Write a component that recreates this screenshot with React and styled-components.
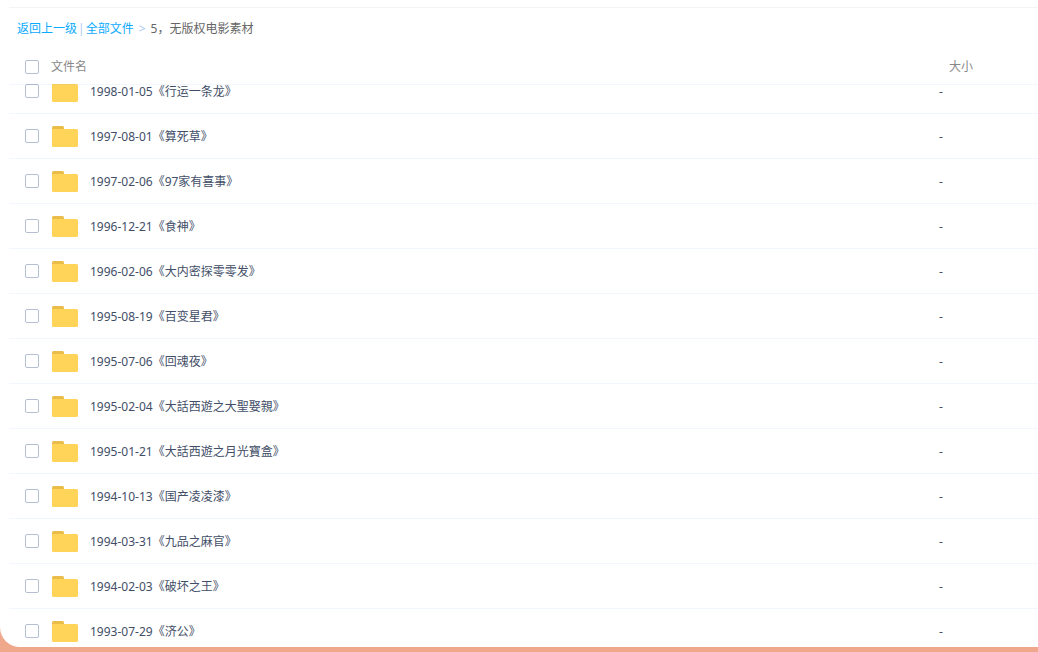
import React, { useLayoutEffect, useRef, useState } from 'react'
import styled, { createGlobalStyle } from 'styled-components';

const folders = [
  '1998-01-05《行运一条龙》',
  '1997-08-01《算死草》',
  '1997-02-06《97家有喜事》',
  '1996-12-21《食神》',
  '1996-02-06《大内密探零零发》',
  '1995-08-19《百变星君》',
  '1995-07-06《回魂夜》',
  '1995-02-04《大話西遊之大聖娶親》',
  '1995-01-21《大話西遊之月光寶盒》',
  '1994-10-13《国产凌凌漆》',
  '1994-03-31《九品之麻官》',
  '1994-02-03《破坏之王》',
  '1993-07-29《济公》',
];

const FolderIcon = () => (
  <Folder viewBox="0 0 26 21" aria-hidden="true">
    <path d="M0 6V1.5Q0 0 1.5 0H10.5Q12 0 12 1.5V6Z" fill="#eabd4a" />
    <path d="M0 3H24.5Q26 3 26 4.5V19.5Q26 21 24.5 21H1.5Q0 21 0 19.5Z" fill="#ffd459" />
  </Folder>
)

const App = () => {
  const [selected, setSelected] = useState([]);
  const listRef = useRef(null);

  // the list opens slightly scrolled, under the sticky header
  useLayoutEffect(() => {
    listRef.current.scrollTop = 16;
  }, [])

  const toggle = (name) => {
    setSelected(selected.includes(name) ? selected.filter((n) => n !== name) : [...selected, name])
  }
  const toggleAll = () => {
    setSelected(selected.length === folders.length ? [] : folders)
  }

  return (
    <Page>
      <GlobalStyle />
      <Panel>
        <Breadcrumb>
          <a href="#back">返回上一级</a>
          <Divider>|</Divider>
          <a href="#all">全部文件</a>
          <Arrow>&gt;</Arrow>
          <span>5，无版权电影素材</span>
        </Breadcrumb>
        <List ref={listRef}>
          <Table>
            <thead>
              <tr>
                <HeadCell $width="42px">
                  <Checkbox
                    type="checkbox"
                    aria-label="全选"
                    checked={selected.length === folders.length}
                    onChange={toggleAll}
                  />
                </HeadCell>
                <HeadCell>文件名</HeadCell>
                <HeadCell $width="99px" $indent="10px">大小</HeadCell>
              </tr>
            </thead>
            <tbody>
              {folders.map((name) => (
                <tr key={name}>
                  <Cell>
                    <Checkbox
                      type="checkbox"
                      aria-label={name}
                      checked={selected.includes(name)}
                      onChange={() => toggle(name)}
                    />
                  </Cell>
                  <Cell>
                    <FileName>
                      <FolderIcon />
                      <Label>{name}</Label>
                    </FileName>
                  </Cell>
                  <Cell>
                    <Label>-</Label>
                  </Cell>
                </tr>
              ))}
            </tbody>
          </Table>
        </List>
      </Panel>
    </Page>
  )
}

const GlobalStyle = createGlobalStyle`
  * {
    box-sizing: border-box;
  }
  body {
    margin: 0;
    font-family: "Noto Sans", "Noto Sans CJK SC", sans-serif;
    font-size: 12px;
    line-height: 18px;
  }
`;
const Page = styled.div`
  height: 100vh;
  background-color: #f0a88c;
  padding-bottom: 5px;
`;
const Panel = styled.main`
  height: 100%;
  display: flex;
  flex-direction: column;
  padding: 7px 0 0 9px;
  background-color: #fff;
  border-bottom-left-radius: 20px;
`;
const Breadcrumb = styled.nav`
  display: flex;
  align-items: center;
  height: 38px;
  flex-shrink: 0;
  padding: 4px 8px 0;
  border-top: 1px solid #f4f4f6;
  color: #666;

  a {
    color: #09aaff;
    text-decoration: none;
  }
`;
const Divider = styled.span`
  margin: 0 1px;
  color: #a9c9f5;
`;
const Arrow = styled.span`
  margin: 0 5px;
  color: #a9c9f5;
`;
const List = styled.div`
  flex: 1;
  min-height: 0;
  overflow-y: auto;
  scrollbar-width: none;
`;
const Table = styled.table`
  width: 100%;
  table-layout: fixed;
  border-collapse: separate;
  border-spacing: 0;
`;
const HeadCell = styled.th`
  position: sticky;
  top: 0;
  z-index: 1;
  width: ${(props) => props.$width || 'auto'};
  height: 40px;
  padding: 4px 0 0 ${(props) => props.$indent || '0'};
  border-bottom: 1px solid rgba(0, 75, 215, 0.05);
  background-color: #fff;
  background-clip: padding-box;
  color: #888;
  font-weight: 400;
  text-align: left;
`;
const Cell = styled.td`
  height: 45px;
  padding: 0;
  border-bottom: 1px solid #f2f6fd;
  color: #424e67;
`;
const Checkbox = styled.input`
  appearance: none;
  display: block;
  width: 14px;
  height: 14px;
  margin: 0 0 0 16px;
  border: 1px solid #b4c0d1;
  border-radius: 2px;
  background-color: #fff;
  cursor: pointer;

  &:checked {
    border-color: #09aaff;
    background-color: #09aaff;
  }
`;
const FileName = styled.div`
  display: flex;
  align-items: center;
  padding-left: 1px;
`;
const Folder = styled.svg`
  width: 26px;
  height: 21px;
  margin-right: 12px;
`;
const Label = styled.span`
  display: block;
  padding-top: 2px;
`;

export default App
